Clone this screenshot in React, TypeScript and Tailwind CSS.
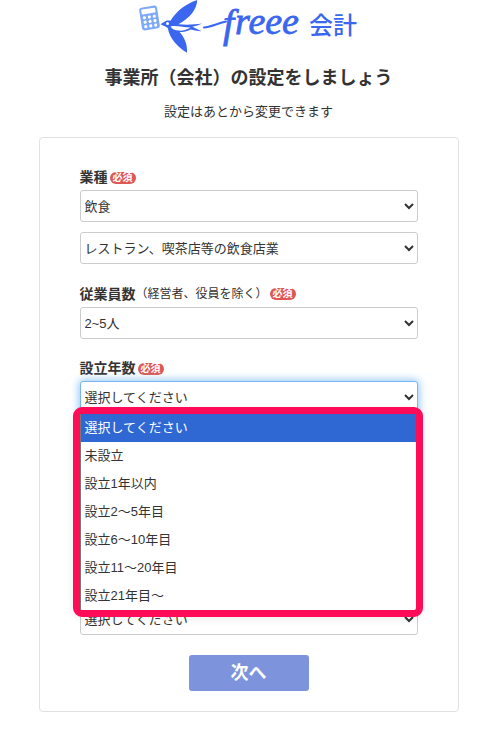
import { FC, ReactNode, useState } from 'react';

/**
 * Props for the Field component.
 */
interface FieldProps {
  id: string; // Id of the select that the label belongs to
  label: string; // Label text
  note?: string; // Small remark after the label
  children: ReactNode; // The controls of the field
}

/**
 * Props for the SelectBox component.
 */
interface SelectBoxProps {
  id: string;
  value: string;
  options: string[];
  onChange?: (value: string) => void;
  active?: boolean; // Draws the focus glow
  ariaLabel?: string;
}

const PLACEHOLDER = '選択してください';

const YEARS = [
  PLACEHOLDER,
  '未設立',
  '設立1年以内',
  '設立2～5年目',
  '設立6～10年目',
  '設立11～20年目',
  '設立21年目～',
];

/**
 * Product logo: calculator, swallow and wordmark.
 */
const Logo: FC = () => (
  <svg className="h-[54px] w-[220px]" viewBox="139 0 220 54" role="img" aria-label="freee 会計">
    <g transform="rotate(-9 149.500 18)">
      <rect x="140.500" y="6.500" width="18" height="23" rx="2.500" fill="#7da9f8" />
      <rect x="142.500" y="8.500" width="14" height="5" rx="1" fill="#fff" />
      {[17, 21.5, 26].map((cy) =>
        [144.5, 149.5, 154.5].map((cx) => <circle key={`${cx}-${cy}`} cx={cx} cy={cy} r="1.600" fill="#fff" />)
      )}
    </g>
    <g fill="#3a66f0">
      <path d="M160.500 24.300L164 22C165.500 20.400 168 20 170.500 20.800C176 12 184 4.500 197.200 0C197 9 190 18 178.500 24.300C187 25.200 195 24.600 202 23.600C199 25.200 196 26 192.500 26.800L201.500 31.200C197 30.800 193.500 30 190.500 29.400C187 31.300 183.500 32 179.500 32C184.500 37.500 187.500 44 187 52.800C178.500 47.500 169.500 39 167.800 28C165.500 26.800 163.500 25.500 160.500 24.300Z" />
      <path d="M170.500 26.400C177 25.300 184 27.600 190.500 27.600C187 30 182.500 31 178.500 30.600C175 30.300 172 28.900 170.500 26.400Z" fill="#fff" />
      <circle cx="167.500" cy="23.600" r="1.500" fill="#fff" />
    </g>
    <path d="M204 27.500C210 27 216 24 226 21.500" fill="none" stroke="#3a66f0" strokeWidth="2" strokeLinecap="round" />
    <g className="fill-[#3a66f0] stroke-[#3a66f0] font-['Liberation_Serif'] italic" strokeWidth="0.800">
      <text x="223" y="37" className="text-[40px]">f</text>
      <text x="235" y="34" className="text-[38px]">reee</text>
    </g>
    <text x="309" y="34" className="fill-[#3a66f0] font-['Noto_Sans_CJK_JP'] text-[24px] font-medium">会計</text>
  </svg>
);

const SelectBox: FC<SelectBoxProps> = ({ id, value, options, onChange, active, ariaLabel }) => (
  <select
    id={id}
    aria-label={ariaLabel}
    value={value}
    onChange={(e) => onChange?.(e.target.value)}
    className={`block h-8 w-full rounded-[3px] border bg-white text-[13px] outline-none ${
      active ? 'border-[#7ab6ee] shadow-[0_0_8px_1px_#8cc4f8]' : 'border-[#ccc]'
    }`}
  >
    {options.map((option) => (
      <option key={option}>{option}</option>
    ))}
  </select>
);

/**
 * Labelled field, every one of them is required.
 */
const Field: FC<FieldProps> = ({ id, label, note, children }) => (
  <div>
    <label htmlFor={id} className="mb-[3px] flex items-center text-[14px] leading-[19px] font-bold">
      {label}
      {note && <span className="text-[12px] leading-5 font-normal">{note}</span>}
      <span className="ml-0.5 rounded-full bg-[#dd5855] px-[3px] text-[10px] leading-3 text-white">必須</span>
    </label>
    {children}
  </div>
);

const App: FC = () => {
  const [industry, setIndustry] = useState<string>('飲食');
  const [category, setCategory] = useState<string>('レストラン、喫茶店等の飲食店業');
  const [employees, setEmployees] = useState<string>('2~5人');
  const [years, setYears] = useState<string>(PLACEHOLDER);

  return (
    <main className="bg-white px-9 pb-8 font-['Liberation_Sans','Noto_Sans_CJK_JP',sans-serif] text-[#333]">
      <header className="flex flex-col items-center text-center">
        <Logo />
        <h1 className="mt-2.5 text-[18px] leading-7 font-bold">事業所（会社）の設定をしましょう</h1>
        <p className="mt-2 text-[13px] leading-6">設定はあとから変更できます</p>
      </header>

      <form className="mx-auto mt-[13px] max-w-[420px] rounded-[4px] border border-[#e1e1e1] px-10 pt-[30px] pb-5">
        <div className="flex flex-col gap-5">
          <Field id="industry" label="業種">
            <div className="flex flex-col gap-2.5">
              <SelectBox id="industry" value={industry} onChange={setIndustry} options={['飲食']} />
              <SelectBox
                id="category"
                ariaLabel="業種の詳細"
                value={category}
                onChange={setCategory}
                options={['レストラン、喫茶店等の飲食店業']}
              />
            </div>
          </Field>

          <Field id="employees" label="従業員数" note="（経営者、役員を除く）">
            <SelectBox id="employees" value={employees} onChange={setEmployees} options={['2~5人']} />
          </Field>

          <Field id="years" label="設立年数">
            <div className="relative">
              <SelectBox id="years" value={years} onChange={setYears} options={YEARS} active />
              {/* Opened option list */}
              <div className="absolute top-[26px] -right-[5px] -left-[7px] z-10 rounded-[9px] border-[7px] border-[#ff0b58] bg-white shadow-[0_2px_8px_rgba(0,0,0,0.08)]">
                <ul role="listbox" aria-label="設立年数" className="border-l border-[#777]">
                  {YEARS.map((option) => (
                    <li key={option} role="option" aria-selected={option === years}>
                      <button
                        type="button"
                        onClick={() => setYears(option)}
                        className={`block h-7 w-full pl-1 text-left text-[13px] leading-7 ${
                          option === years ? 'bg-[#2f67d3] text-white' : ''
                        }`}
                      >
                        {option}
                      </button>
                    </li>
                  ))}
                </ul>
              </div>
            </div>
          </Field>
        </div>

        {/* The list above spans the gap before this one */}
        <div className="mt-[190px]">
          <SelectBox id="other" ariaLabel="その他" value={PLACEHOLDER} options={[PLACEHOLDER]} />
        </div>

        <button type="button" className="mx-auto mt-5 block h-9 w-[120px] rounded-[3px] bg-[#7d94dd] text-[18px] font-bold text-white">
          次へ
        </button>
      </form>
    </main>
  );
};

export default App;
